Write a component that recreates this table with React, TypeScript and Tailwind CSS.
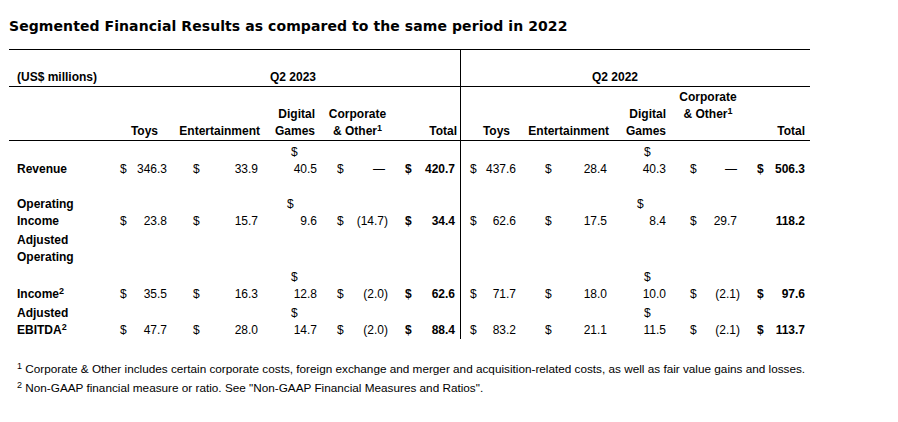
import type { ReactNode } from 'react'

const GRID = 'grid grid-cols-[104px_59px_91px_59px_71px_67px_61px_90px_60px_74px_65px]'

type YearCfg = {
  toys: string
  ent: string
  corp: string
  total: string
}

const Y23: YearCfg = {
  toys: 'pl-[7px] pr-[5px]',
  ent: 'pl-[21px] pr-[5px]',
  corp: 'pl-[15px]',
  total: 'pl-[12px] pr-[5px]',
}

const Y22: YearCfg = {
  toys: 'pl-[9px] pr-[5px] border-l border-black',
  ent: 'pl-[24px] pr-[4px]',
  corp: 'pl-[19px]',
  total: 'pl-[12px] pr-[5px]',
}

type Vals = {
  toys: string
  ent: string
  dig: string
  digPad: string
  corp: string
  total: string
  totalDollar?: boolean
}

type RowData = {
  label: ReactNode
  h: string
  pb: string
  a: Vals
  b: Vals
}

const rows: RowData[] = [
  {
    label: 'Revenue',
    h: 'h-[39px]',
    pb: 'pb-[2px]',
    a: { toys: '346.3', ent: '33.9', dig: '40.5', digPad: 'pl-[28px]', corp: '—', total: '420.7', totalDollar: true },
    b: { toys: '437.6', ent: '28.4', dig: '40.3', digPad: 'pl-[33px]', corp: '—', total: '506.3', totalDollar: true },
  },
  {
    label: (
      <>
        <div>Operating</div>
        <div>Income</div>
      </>
    ),
    h: 'h-[52px]',
    pb: 'pb-[2px]',
    a: { toys: '23.8', ent: '15.7', dig: '9.6', digPad: 'pl-[24px]', corp: '(14.7)', total: '34.4', totalDollar: true },
    b: { toys: '62.6', ent: '17.5', dig: '8.4', digPad: 'pl-[26px]', corp: '29.7', total: '118.2' },
  },
  {
    label: (
      <div className="flex h-full flex-col justify-between">
        <div>
          <div>Adjusted</div>
          <div>Operating</div>
        </div>
        <div>
          Income<sup className="text-[9px]">2</sup>
        </div>
      </div>
    ),
    h: 'h-[73px]',
    pb: 'pb-[2px]',
    a: { toys: '35.5', ent: '16.3', dig: '12.8', digPad: 'pl-[28px]', corp: '(2.0)', total: '62.6', totalDollar: true },
    b: { toys: '71.7', ent: '18.0', dig: '10.0', digPad: 'pl-[33px]', corp: '(2.1)', total: '97.6', totalDollar: true },
  },
  {
    label: (
      <>
        <div>Adjusted</div>
        <div>
          EBITDA<sup className="text-[9px]">2</sup>
        </div>
      </>
    ),
    h: 'h-[34px]',
    pb: 'pb-0',
    a: { toys: '47.7', ent: '28.0', dig: '14.7', digPad: 'pl-[28px]', corp: '(2.0)', total: '88.4', totalDollar: true },
    b: { toys: '83.2', ent: '21.1', dig: '11.5', digPad: 'pl-[33px]', corp: '(2.1)', total: '113.7', totalDollar: true },
  },
]

function YearCells({ cfg, v, pb }: { cfg: YearCfg; v: Vals; pb: string }) {
  const corpPr = v.corp.startsWith('(') ? 'pr-[5px]' : 'pr-[8px]'
  return (
    <>
      <div className={`flex items-end justify-between ${cfg.toys} ${pb}`}>
        <span>$</span>
        <span>{v.toys}</span>
      </div>
      <div className={`flex items-end justify-between ${cfg.ent} ${pb}`}>
        <span>$</span>
        <span>{v.ent}</span>
      </div>
      <div className={`flex flex-col justify-end ${pb}`}>
        <span className={v.digPad}>$</span>
        <span className="pr-[5px] text-right">{v.dig}</span>
      </div>
      <div className={`flex items-end justify-between ${cfg.corp} ${corpPr} ${pb}`}>
        <span>$</span>
        <span>{v.corp}</span>
      </div>
      <div className={`flex items-end ${v.totalDollar ? 'justify-between' : 'justify-end'} font-bold ${cfg.total} ${pb}`}>
        {v.totalDollar && <span>$</span>}
        <span>{v.total}</span>
      </div>
    </>
  )
}

function YearHeads({ second }: { second?: boolean }) {
  return (
    <>
      <div className={`flex items-end justify-end ${second ? 'border-l border-black pr-[11px]' : 'pr-[14px]'}`}>Toys</div>
      <div className={`flex items-end justify-end ${second ? 'pr-[2px]' : 'pr-[3px]'}`}>Entertainment</div>
      <div className={`flex flex-col items-end justify-end ${second ? 'pr-[5px]' : 'pr-[7px]'}`}>
        <div>Digital</div>
        <div>Games</div>
      </div>
      <div className="flex flex-col items-center justify-end">
        <div>Corporate</div>
        <div>
          &amp; Other<sup className="text-[9px]">1</sup>
        </div>
        {second && <div>&nbsp;</div>}
      </div>
      <div className={`flex items-end justify-end ${second ? 'pr-[5px]' : 'pr-[3px]'}`}>Total</div>
    </>
  )
}

export default function App() {
  return (
    <div className="h-[422px] w-[898px] bg-white text-[12px] leading-[17px] text-black font-['Liberation_Sans',Arial,sans-serif]">
      <h1 className="pl-[9px] pt-[17px] text-[14px] leading-[18px] tracking-[0.08px] font-bold font-['DejaVu_Sans',Verdana,sans-serif]">
        Segmented Financial Results as compared to the same period in 2022
      </h1>

      <div className="ml-[9px] mt-[14px] w-[801px]">
        <div className={`${GRID} h-[38px] border-y border-black font-bold`}>
          <div className="flex items-end pl-[8px]">(US$ millions)</div>
          <div className="col-span-5 flex items-end pl-[157px]">Q2 2023</div>
          <div className="col-span-5 flex items-end border-l border-black pl-[131px]">Q2 2022</div>
        </div>

        <div className={`${GRID} h-[54px] border-b border-black font-bold`}>
          <div />
          <YearHeads />
          <YearHeads second />
        </div>

        {rows.map((r, i) => (
          <div key={i} className={`${GRID} ${r.h}`}>
            <div className={`flex flex-col justify-end pl-[8px] font-bold ${r.pb}`}>{r.label}</div>
            <YearCells cfg={Y23} v={r.a} pb={r.pb} />
            <YearCells cfg={Y22} v={r.b} pb={r.pb} />
          </div>
        ))}
      </div>

      <div className="mt-[20px] pl-[17px] text-[11.75px] leading-[19px]">
        <p>
          <sup className="text-[9px]">1</sup> Corporate &amp; Other includes certain corporate costs, foreign exchange and
          merger and acquisition-related costs, as well as fair value gains and losses.
        </p>
        <p>
          <sup className="text-[9px]">2</sup> Non-GAAP financial measure or ratio. See "Non-GAAP Financial Measures and
          Ratios".
        </p>
      </div>
    </div>
  )
}
